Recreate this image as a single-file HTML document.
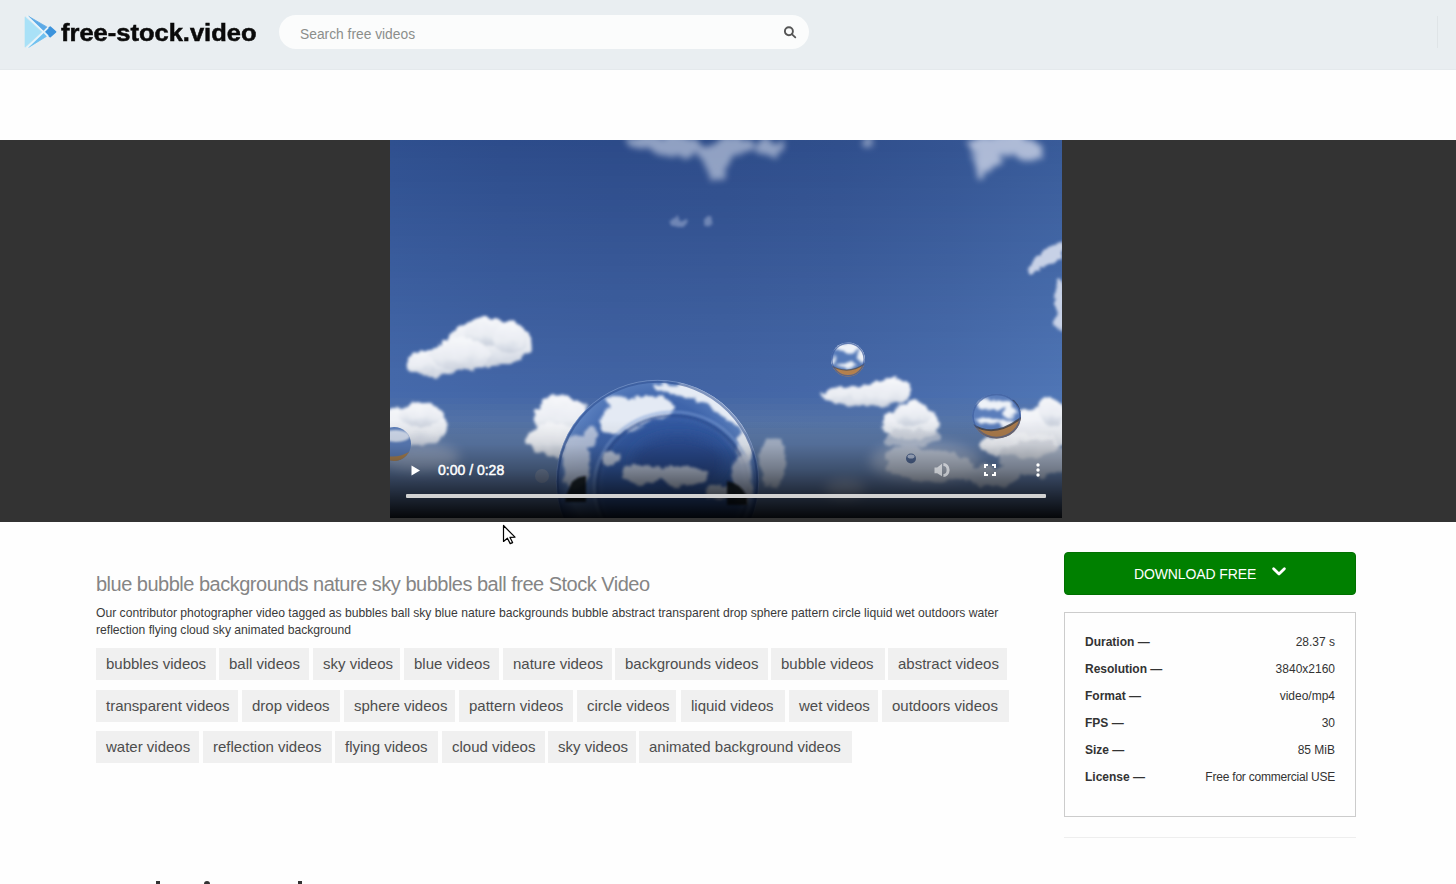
<!DOCTYPE html>
<html><head><meta charset="utf-8">
<style>
*{box-sizing:border-box}
html,body{margin:0;padding:0}
body{width:1456px;height:884px;overflow:hidden;background:#fefefe;position:relative;font-family:"Liberation Sans",sans-serif;color:#333}
.abs{position:absolute}
#hdr{position:absolute;left:0;top:0;width:1456px;height:70px;background:#e9eef1;border-bottom:1px solid #e4e9ec}
#logotxt{position:absolute;left:60.5px;top:18px;font-weight:bold;font-size:23px;line-height:30px;color:#0a0a0a;letter-spacing:0px;transform:scaleX(1.108);transform-origin:0 0;-webkit-text-stroke:0.5px #0a0a0a;white-space:nowrap}
#search{position:absolute;left:279px;top:15px;width:530px;height:34px;border-radius:17px;background:#fbfcfc}
#ph{position:absolute;left:300px;top:26px;font-size:13.8px;line-height:17px;color:#8b8e8b;white-space:nowrap}
#band{position:absolute;left:0;top:140px;width:1456px;height:382px;background:#333}
#video{position:absolute;left:390px;top:140px;width:672px;height:378px;overflow:hidden;background:#31508f}
#title{position:absolute;left:96px;top:572px;font-size:20px;line-height:24px;color:#858585;letter-spacing:-0.5px;white-space:nowrap}
#desc{position:absolute;left:96px;top:605px;width:920px;font-size:12.15px;line-height:17px;color:#3a3a3a}
.tag{position:absolute;height:32px;background:#f0f0f0;font-size:15px;line-height:32px;color:#4d4d4d;padding-left:10px;white-space:nowrap}
#dl{position:absolute;left:1064px;top:552px;width:292px;height:43px;background:#008000;border:1px solid #007000;border-radius:4px;color:#fff}
#dltxt{position:absolute;left:69px;top:13px;font-size:14px;letter-spacing:-0.12px;line-height:17px;white-space:nowrap}
#info{position:absolute;left:1064px;top:612px;width:292px;height:205px;border:1px solid #ccc}
.lab{position:absolute;left:20px;font-size:12px;font-weight:bold;color:#333;white-space:nowrap;line-height:14px}
.val{position:absolute;right:20px;font-size:12px;color:#333;white-space:nowrap;line-height:14px;text-align:right}
</style></head><body>
<div id="hdr"></div>
<svg class="abs" style="left:0px;top:0px" width="70" height="64" viewBox="0 0 70 64">
  <path d="M25,16.8 L41.8,31.9 L25,47.2 Z" fill="#a9e1f7" stroke="#a9e1f7" stroke-width="0.6" stroke-linejoin="round"/>
  <path d="M28.6,16.4 L46.8,26.9 L43.4,30.4 Z" fill="#5ca9e6" stroke="#5ca9e6" stroke-width="0.8" stroke-linejoin="round"/>
  <path d="M28.6,47.4 L46.4,36.4 L43.4,33.2 Z" fill="#70c1f0" stroke="#70c1f0" stroke-width="0.8" stroke-linejoin="round"/>
  <path d="M45,31.8 L50.2,27 L55.6,31.8 L50.2,36.6 Z" fill="#3c93dc" stroke="#3c93dc" stroke-width="1.6" stroke-linejoin="round"/>
  <path d="M27.2,16 L43.6,31.9 L27.2,47.8" fill="none" stroke="#e6f6fd" stroke-width="1.3"/>
  <path d="M44.2,31.9 L48.2,27.8 M44.2,31.9 L48.2,36" fill="none" stroke="#e6f6fd" stroke-width="1.1"/>
</svg>
<div id="logotxt">free-stock.video</div>
<div id="search"></div>
<div id="ph">Search free videos</div>
<svg class="abs" style="left:782px;top:25px" width="16" height="16" viewBox="0 0 16 16">
  <circle cx="6.9" cy="6.2" r="4" fill="none" stroke="#555" stroke-width="1.9"/>
  <line x1="9.8" y1="9.1" x2="13.3" y2="12.4" stroke="#555" stroke-width="1.8" stroke-linecap="round"/>
</svg>
<div class="abs" style="left:1437px;top:16px;width:1px;height:32px;background:#dfe4e7"></div>

<div id="band"></div>
<div id="video"><svg width="672" height="378" viewBox="0 0 672 378" style="position:absolute;left:0;top:0">
<defs>
<linearGradient id="sky" x1="0" y1="0" x2="0" y2="1">
 <stop offset="0" stop-color="#2c4c8c"/>
 <stop offset="0.3" stop-color="#345595"/>
 <stop offset="0.52" stop-color="#3c5f9f"/>
 <stop offset="0.62" stop-color="#4467a6"/>
 <stop offset="0.68" stop-color="#486aa8"/>
 <stop offset="0.78" stop-color="#5a77a5"/>
 <stop offset="1" stop-color="#5d76a0"/>
</linearGradient>
<linearGradient id="shade" x1="0" y1="0" x2="0" y2="1">
 <stop offset="0" stop-color="#000" stop-opacity="0"/>
 <stop offset="0.25" stop-color="#000" stop-opacity="0.08"/>
 <stop offset="0.5" stop-color="#000" stop-opacity="0.32"/>
 <stop offset="0.78" stop-color="#000" stop-opacity="0.68"/>
 <stop offset="1" stop-color="#000" stop-opacity="0.94"/>
</linearGradient>
<filter id="b3" x="-50%" y="-50%" width="200%" height="200%"><feGaussianBlur stdDeviation="3"/></filter>
<filter id="b2" x="-50%" y="-50%" width="200%" height="200%"><feGaussianBlur stdDeviation="2"/></filter>
<filter id="b4" x="-50%" y="-50%" width="200%" height="200%"><feGaussianBlur stdDeviation="4"/></filter>
<filter id="b6" x="-50%" y="-50%" width="200%" height="200%"><feGaussianBlur stdDeviation="6"/></filter>
<filter id="b1" x="-50%" y="-50%" width="200%" height="200%"><feGaussianBlur stdDeviation="1"/></filter>

<filter id="fluff" x="-30%" y="-30%" width="160%" height="160%"><feTurbulence type="fractalNoise" baseFrequency="0.09" numOctaves="3" seed="7" result="n"/><feDisplacementMap in="SourceGraphic" in2="n" scale="10" xChannelSelector="R" yChannelSelector="G" result="d"/><feGaussianBlur in="d" stdDeviation="1.6"/></filter>
<filter id="fluff2" x="-30%" y="-30%" width="160%" height="160%"><feTurbulence type="fractalNoise" baseFrequency="0.1" numOctaves="3" seed="11" result="n"/><feDisplacementMap in="SourceGraphic" in2="n" scale="12" xChannelSelector="R" yChannelSelector="G" result="d"/><feGaussianBlur in="d" stdDeviation="3.2"/></filter>
<linearGradient id="cl" x1="0" y1="0" x2="0" y2="1">
 <stop offset="0" stop-color="#f6f7fa"/>
 <stop offset="0.6" stop-color="#e9ecf2"/>
 <stop offset="1" stop-color="#c9d0dc"/>
</linearGradient>
<radialGradient id="bub" cx="0.5" cy="0.42" r="0.58">
 <stop offset="0" stop-color="#3a5fa6"/>
 <stop offset="0.55" stop-color="#3f65ab"/>
 <stop offset="0.78" stop-color="#5d82c0"/>
 <stop offset="0.9" stop-color="#2c4e94"/>
 <stop offset="1" stop-color="#7d9bd0"/>
</radialGradient>
<clipPath id="bigclip"><circle cx="267.5" cy="341.5" r="101.5"/></clipPath>
<clipPath id="bA"><circle cx="458" cy="219.5" r="17"/></clipPath>
<clipPath id="bB"><ellipse cx="606.5" cy="276" rx="24.5" ry="22.5"/></clipPath>
<clipPath id="bL"><circle cx="4" cy="304" r="17"/></clipPath>
</defs>
<rect width="672" height="378" fill="url(#sky)"/>
<defs><linearGradient id="s0"><stop offset="0.000" stop-color="#2f508f"/><stop offset="0.167" stop-color="#2d4c8b"/><stop offset="0.333" stop-color="#2c4b89"/><stop offset="0.500" stop-color="#2d4c89"/><stop offset="0.667" stop-color="#304f8c"/><stop offset="0.833" stop-color="#345492"/><stop offset="1.000" stop-color="#395b99"/></linearGradient><linearGradient id="s1"><stop offset="0.000" stop-color="#305090"/><stop offset="0.167" stop-color="#2e4d8b"/><stop offset="0.333" stop-color="#2d4b8a"/><stop offset="0.500" stop-color="#2e4c8a"/><stop offset="0.667" stop-color="#304f8d"/><stop offset="0.833" stop-color="#345492"/><stop offset="1.000" stop-color="#395c9a"/></linearGradient><linearGradient id="s2"><stop offset="0.000" stop-color="#305190"/><stop offset="0.167" stop-color="#2e4d8c"/><stop offset="0.333" stop-color="#2e4c8a"/><stop offset="0.500" stop-color="#2e4d8b"/><stop offset="0.667" stop-color="#31508e"/><stop offset="0.833" stop-color="#355593"/><stop offset="1.000" stop-color="#3a5c9b"/></linearGradient><linearGradient id="s3"><stop offset="0.000" stop-color="#315291"/><stop offset="0.167" stop-color="#2f4e8d"/><stop offset="0.333" stop-color="#2e4d8b"/><stop offset="0.500" stop-color="#2f4e8b"/><stop offset="0.667" stop-color="#31518e"/><stop offset="0.833" stop-color="#355694"/><stop offset="1.000" stop-color="#3a5d9b"/></linearGradient><linearGradient id="s4"><stop offset="0.000" stop-color="#315292"/><stop offset="0.167" stop-color="#2f4f8d"/><stop offset="0.333" stop-color="#2f4d8c"/><stop offset="0.500" stop-color="#304e8c"/><stop offset="0.667" stop-color="#32518f"/><stop offset="0.833" stop-color="#365694"/><stop offset="1.000" stop-color="#3b5e9c"/></linearGradient><linearGradient id="s5"><stop offset="0.000" stop-color="#325393"/><stop offset="0.167" stop-color="#304f8e"/><stop offset="0.333" stop-color="#2f4e8c"/><stop offset="0.500" stop-color="#304f8d"/><stop offset="0.667" stop-color="#325290"/><stop offset="0.833" stop-color="#365795"/><stop offset="1.000" stop-color="#3b5e9d"/></linearGradient><linearGradient id="s6"><stop offset="0.000" stop-color="#325393"/><stop offset="0.167" stop-color="#30508f"/><stop offset="0.333" stop-color="#304f8d"/><stop offset="0.500" stop-color="#314f8d"/><stop offset="0.667" stop-color="#335290"/><stop offset="0.833" stop-color="#375896"/><stop offset="1.000" stop-color="#3c5f9d"/></linearGradient><linearGradient id="s7"><stop offset="0.000" stop-color="#335494"/><stop offset="0.167" stop-color="#315190"/><stop offset="0.333" stop-color="#304f8e"/><stop offset="0.500" stop-color="#31508e"/><stop offset="0.667" stop-color="#335391"/><stop offset="0.833" stop-color="#375896"/><stop offset="1.000" stop-color="#3d609e"/></linearGradient><linearGradient id="s8"><stop offset="0.000" stop-color="#335595"/><stop offset="0.167" stop-color="#315190"/><stop offset="0.333" stop-color="#31508e"/><stop offset="0.500" stop-color="#32518f"/><stop offset="0.667" stop-color="#345492"/><stop offset="0.833" stop-color="#385997"/><stop offset="1.000" stop-color="#3d609f"/></linearGradient><linearGradient id="s9"><stop offset="0.000" stop-color="#345595"/><stop offset="0.167" stop-color="#325291"/><stop offset="0.333" stop-color="#31508f"/><stop offset="0.500" stop-color="#32518f"/><stop offset="0.667" stop-color="#355492"/><stop offset="0.833" stop-color="#385998"/><stop offset="1.000" stop-color="#3e619f"/></linearGradient><linearGradient id="s10"><stop offset="0.000" stop-color="#355696"/><stop offset="0.167" stop-color="#325292"/><stop offset="0.333" stop-color="#325190"/><stop offset="0.500" stop-color="#335290"/><stop offset="0.667" stop-color="#355593"/><stop offset="0.833" stop-color="#395a98"/><stop offset="1.000" stop-color="#3e61a0"/></linearGradient><linearGradient id="s11"><stop offset="0.000" stop-color="#355797"/><stop offset="0.167" stop-color="#335392"/><stop offset="0.333" stop-color="#325290"/><stop offset="0.500" stop-color="#335391"/><stop offset="0.667" stop-color="#365694"/><stop offset="0.833" stop-color="#395b99"/><stop offset="1.000" stop-color="#3f62a1"/></linearGradient><linearGradient id="s12"><stop offset="0.000" stop-color="#365797"/><stop offset="0.167" stop-color="#345493"/><stop offset="0.333" stop-color="#335291"/><stop offset="0.500" stop-color="#345391"/><stop offset="0.667" stop-color="#365694"/><stop offset="0.833" stop-color="#3a5b9a"/><stop offset="1.000" stop-color="#3f63a1"/></linearGradient><linearGradient id="s13"><stop offset="0.000" stop-color="#365898"/><stop offset="0.167" stop-color="#345494"/><stop offset="0.333" stop-color="#335392"/><stop offset="0.500" stop-color="#345492"/><stop offset="0.667" stop-color="#375795"/><stop offset="0.833" stop-color="#3b5c9a"/><stop offset="1.000" stop-color="#4063a2"/></linearGradient><linearGradient id="s14"><stop offset="0.000" stop-color="#375899"/><stop offset="0.167" stop-color="#355594"/><stop offset="0.333" stop-color="#345492"/><stop offset="0.500" stop-color="#355493"/><stop offset="0.667" stop-color="#375796"/><stop offset="0.833" stop-color="#3b5d9b"/><stop offset="1.000" stop-color="#4064a3"/></linearGradient><linearGradient id="s15"><stop offset="0.000" stop-color="#375999"/><stop offset="0.167" stop-color="#355695"/><stop offset="0.333" stop-color="#355493"/><stop offset="0.500" stop-color="#355593"/><stop offset="0.667" stop-color="#385896"/><stop offset="0.833" stop-color="#3c5d9c"/><stop offset="1.000" stop-color="#4165a3"/></linearGradient><linearGradient id="s16"><stop offset="0.000" stop-color="#385a9a"/><stop offset="0.167" stop-color="#365696"/><stop offset="0.333" stop-color="#355594"/><stop offset="0.500" stop-color="#365694"/><stop offset="0.667" stop-color="#385997"/><stop offset="0.833" stop-color="#3c5e9c"/><stop offset="1.000" stop-color="#4165a4"/></linearGradient><linearGradient id="s17"><stop offset="0.000" stop-color="#385a9b"/><stop offset="0.167" stop-color="#365796"/><stop offset="0.333" stop-color="#365694"/><stop offset="0.500" stop-color="#375695"/><stop offset="0.667" stop-color="#395998"/><stop offset="0.833" stop-color="#3d5f9d"/><stop offset="1.000" stop-color="#4266a5"/></linearGradient><linearGradient id="s18"><stop offset="0.000" stop-color="#395b9b"/><stop offset="0.167" stop-color="#375797"/><stop offset="0.333" stop-color="#365695"/><stop offset="0.500" stop-color="#375795"/><stop offset="0.667" stop-color="#395a98"/><stop offset="0.833" stop-color="#3d5f9e"/><stop offset="1.000" stop-color="#4366a5"/></linearGradient><linearGradient id="s19"><stop offset="0.000" stop-color="#395c9c"/><stop offset="0.167" stop-color="#375898"/><stop offset="0.333" stop-color="#375796"/><stop offset="0.500" stop-color="#385896"/><stop offset="0.667" stop-color="#3a5b99"/><stop offset="0.833" stop-color="#3e609e"/><stop offset="1.000" stop-color="#4367a6"/></linearGradient><linearGradient id="s20"><stop offset="0.000" stop-color="#3a5c9d"/><stop offset="0.167" stop-color="#385998"/><stop offset="0.333" stop-color="#375796"/><stop offset="0.500" stop-color="#385897"/><stop offset="0.667" stop-color="#3a5b9a"/><stop offset="0.833" stop-color="#3e609f"/><stop offset="1.000" stop-color="#4468a7"/></linearGradient><linearGradient id="s21"><stop offset="0.000" stop-color="#3a5d9d"/><stop offset="0.167" stop-color="#385999"/><stop offset="0.333" stop-color="#385897"/><stop offset="0.500" stop-color="#395997"/><stop offset="0.667" stop-color="#3b5c9a"/><stop offset="0.833" stop-color="#3f61a0"/><stop offset="1.000" stop-color="#4468a7"/></linearGradient><linearGradient id="s22"><stop offset="0.000" stop-color="#3b5d9e"/><stop offset="0.167" stop-color="#395a9a"/><stop offset="0.333" stop-color="#385998"/><stop offset="0.500" stop-color="#395998"/><stop offset="0.667" stop-color="#3c5c9b"/><stop offset="0.833" stop-color="#3f62a0"/><stop offset="1.000" stop-color="#4569a8"/></linearGradient><linearGradient id="s23"><stop offset="0.000" stop-color="#3c5e9f"/><stop offset="0.167" stop-color="#395b9a"/><stop offset="0.333" stop-color="#395998"/><stop offset="0.500" stop-color="#3a5a99"/><stop offset="0.667" stop-color="#3c5d9c"/><stop offset="0.833" stop-color="#4062a1"/><stop offset="1.000" stop-color="#456aa9"/></linearGradient><linearGradient id="s24"><stop offset="0.000" stop-color="#3c5f9f"/><stop offset="0.167" stop-color="#3a5b9b"/><stop offset="0.333" stop-color="#395a99"/><stop offset="0.500" stop-color="#3a5b99"/><stop offset="0.667" stop-color="#3d5e9c"/><stop offset="0.833" stop-color="#4063a2"/><stop offset="1.000" stop-color="#466aa9"/></linearGradient><linearGradient id="s25"><stop offset="0.000" stop-color="#3d5fa0"/><stop offset="0.167" stop-color="#3b5c9c"/><stop offset="0.333" stop-color="#3a5b9a"/><stop offset="0.500" stop-color="#3b5b9a"/><stop offset="0.667" stop-color="#3d5e9d"/><stop offset="0.833" stop-color="#4164a2"/><stop offset="1.000" stop-color="#466baa"/></linearGradient><linearGradient id="s26"><stop offset="0.000" stop-color="#3d60a1"/><stop offset="0.167" stop-color="#3b5d9c"/><stop offset="0.333" stop-color="#3a5b9a"/><stop offset="0.500" stop-color="#3b5c9b"/><stop offset="0.667" stop-color="#3e5f9e"/><stop offset="0.833" stop-color="#4264a3"/><stop offset="1.000" stop-color="#476cab"/></linearGradient><linearGradient id="s27"><stop offset="0.000" stop-color="#3e61a1"/><stop offset="0.167" stop-color="#3c5d9d"/><stop offset="0.333" stop-color="#3b5c9b"/><stop offset="0.500" stop-color="#3c5d9b"/><stop offset="0.667" stop-color="#3e609e"/><stop offset="0.833" stop-color="#4265a4"/><stop offset="1.000" stop-color="#476cab"/></linearGradient><linearGradient id="s28"><stop offset="0.000" stop-color="#3e61a2"/><stop offset="0.167" stop-color="#3c5e9e"/><stop offset="0.333" stop-color="#3c5c9c"/><stop offset="0.500" stop-color="#3c5d9c"/><stop offset="0.667" stop-color="#3f609f"/><stop offset="0.833" stop-color="#4365a4"/><stop offset="1.000" stop-color="#486dac"/></linearGradient><linearGradient id="s29"><stop offset="0.000" stop-color="#3f62a3"/><stop offset="0.167" stop-color="#3d5e9e"/><stop offset="0.333" stop-color="#3c5d9c"/><stop offset="0.500" stop-color="#3d5e9d"/><stop offset="0.667" stop-color="#3f61a0"/><stop offset="0.833" stop-color="#4366a5"/><stop offset="1.000" stop-color="#486dad"/></linearGradient><linearGradient id="s30"><stop offset="0.000" stop-color="#3f63a3"/><stop offset="0.167" stop-color="#3d5f9f"/><stop offset="0.333" stop-color="#3d5e9d"/><stop offset="0.500" stop-color="#3e5f9d"/><stop offset="0.667" stop-color="#4062a0"/><stop offset="0.833" stop-color="#4467a6"/><stop offset="1.000" stop-color="#496ead"/></linearGradient><linearGradient id="s31"><stop offset="0.000" stop-color="#4063a4"/><stop offset="0.167" stop-color="#3e60a0"/><stop offset="0.333" stop-color="#3d5e9e"/><stop offset="0.500" stop-color="#3e5f9e"/><stop offset="0.667" stop-color="#4062a1"/><stop offset="0.833" stop-color="#4467a6"/><stop offset="1.000" stop-color="#4a6fae"/></linearGradient><linearGradient id="s32"><stop offset="0.000" stop-color="#4064a5"/><stop offset="0.167" stop-color="#3e60a0"/><stop offset="0.333" stop-color="#3e5f9e"/><stop offset="0.500" stop-color="#3f609f"/><stop offset="0.667" stop-color="#4163a2"/><stop offset="0.833" stop-color="#4568a7"/><stop offset="1.000" stop-color="#4a6faf"/></linearGradient><linearGradient id="s33"><stop offset="0.000" stop-color="#4164a5"/><stop offset="0.167" stop-color="#3f61a1"/><stop offset="0.333" stop-color="#3e609f"/><stop offset="0.500" stop-color="#3f609f"/><stop offset="0.667" stop-color="#4163a2"/><stop offset="0.833" stop-color="#4569a8"/><stop offset="1.000" stop-color="#4b70af"/></linearGradient><linearGradient id="s34"><stop offset="0.000" stop-color="#4165a6"/><stop offset="0.167" stop-color="#3f62a2"/><stop offset="0.333" stop-color="#3f60a0"/><stop offset="0.500" stop-color="#4061a0"/><stop offset="0.667" stop-color="#4264a3"/><stop offset="0.833" stop-color="#4669a8"/><stop offset="1.000" stop-color="#4b71b0"/></linearGradient><linearGradient id="s35"><stop offset="0.000" stop-color="#4266a7"/><stop offset="0.167" stop-color="#4062a2"/><stop offset="0.333" stop-color="#3f61a0"/><stop offset="0.500" stop-color="#4062a1"/><stop offset="0.667" stop-color="#4365a4"/><stop offset="0.833" stop-color="#466aa9"/><stop offset="1.000" stop-color="#4c71b1"/></linearGradient><linearGradient id="s36"><stop offset="0.000" stop-color="#4366a7"/><stop offset="0.167" stop-color="#4063a3"/><stop offset="0.333" stop-color="#4061a1"/><stop offset="0.500" stop-color="#4162a1"/><stop offset="0.667" stop-color="#4365a4"/><stop offset="0.833" stop-color="#476aaa"/><stop offset="1.000" stop-color="#4c72b1"/></linearGradient><linearGradient id="s37"><stop offset="0.000" stop-color="#4367a8"/><stop offset="0.167" stop-color="#4163a4"/><stop offset="0.333" stop-color="#4062a2"/><stop offset="0.500" stop-color="#4163a2"/><stop offset="0.667" stop-color="#4466a5"/><stop offset="0.833" stop-color="#476baa"/><stop offset="1.000" stop-color="#4d72b2"/></linearGradient><linearGradient id="s38"><stop offset="0.000" stop-color="#4468a9"/><stop offset="0.167" stop-color="#4264a4"/><stop offset="0.333" stop-color="#4163a2"/><stop offset="0.500" stop-color="#4264a3"/><stop offset="0.667" stop-color="#4467a6"/><stop offset="0.833" stop-color="#486cab"/><stop offset="1.000" stop-color="#4d73b3"/></linearGradient><linearGradient id="s39"><stop offset="0.000" stop-color="#4468a9"/><stop offset="0.167" stop-color="#4265a5"/><stop offset="0.333" stop-color="#4163a3"/><stop offset="0.500" stop-color="#4264a3"/><stop offset="0.667" stop-color="#4567a6"/><stop offset="0.833" stop-color="#496cac"/><stop offset="1.000" stop-color="#4e74b3"/></linearGradient><linearGradient id="s40"><stop offset="0.000" stop-color="#4569aa"/><stop offset="0.167" stop-color="#4365a6"/><stop offset="0.333" stop-color="#4264a4"/><stop offset="0.500" stop-color="#4365a4"/><stop offset="0.667" stop-color="#4568a7"/><stop offset="0.833" stop-color="#496dac"/><stop offset="1.000" stop-color="#4e74b4"/></linearGradient><linearGradient id="s41"><stop offset="0.000" stop-color="#4569ab"/><stop offset="0.167" stop-color="#4366a6"/><stop offset="0.333" stop-color="#4365a4"/><stop offset="0.500" stop-color="#4365a5"/><stop offset="0.667" stop-color="#4668a8"/><stop offset="0.833" stop-color="#4a6ead"/><stop offset="1.000" stop-color="#4f75b5"/></linearGradient><linearGradient id="s42"><stop offset="0.000" stop-color="#466aab"/><stop offset="0.167" stop-color="#4467a7"/><stop offset="0.333" stop-color="#4365a5"/><stop offset="0.500" stop-color="#4466a5"/><stop offset="0.667" stop-color="#4669a8"/><stop offset="0.833" stop-color="#4a6eae"/><stop offset="1.000" stop-color="#4f76b5"/></linearGradient><linearGradient id="s43"><stop offset="0.000" stop-color="#496caa"/><stop offset="0.167" stop-color="#4769a7"/><stop offset="0.333" stop-color="#4768a5"/><stop offset="0.500" stop-color="#4769a5"/><stop offset="0.667" stop-color="#496ba8"/><stop offset="0.833" stop-color="#4d70ac"/><stop offset="1.000" stop-color="#5176b3"/></linearGradient><linearGradient id="s44"><stop offset="0.000" stop-color="#4c6ea9"/><stop offset="0.167" stop-color="#4a6ca6"/><stop offset="0.333" stop-color="#4a6ba5"/><stop offset="0.500" stop-color="#4b6ba5"/><stop offset="0.667" stop-color="#4c6da7"/><stop offset="0.833" stop-color="#4f71ab"/><stop offset="1.000" stop-color="#5376b0"/></linearGradient><linearGradient id="s45"><stop offset="0.000" stop-color="#4f70a8"/><stop offset="0.167" stop-color="#4e6ea6"/><stop offset="0.333" stop-color="#4d6da5"/><stop offset="0.500" stop-color="#4e6ea5"/><stop offset="0.667" stop-color="#4f6fa7"/><stop offset="0.833" stop-color="#5172aa"/><stop offset="1.000" stop-color="#5476ae"/></linearGradient><linearGradient id="s46"><stop offset="0.000" stop-color="#5272a8"/><stop offset="0.167" stop-color="#5170a6"/><stop offset="0.333" stop-color="#5170a5"/><stop offset="0.500" stop-color="#5170a5"/><stop offset="0.667" stop-color="#5271a6"/><stop offset="0.833" stop-color="#5474a8"/><stop offset="1.000" stop-color="#5676ac"/></linearGradient><linearGradient id="s47"><stop offset="0.000" stop-color="#5574a7"/><stop offset="0.167" stop-color="#5473a5"/><stop offset="0.333" stop-color="#5473a5"/><stop offset="0.500" stop-color="#5473a5"/><stop offset="0.667" stop-color="#5574a6"/><stop offset="0.833" stop-color="#5675a7"/><stop offset="1.000" stop-color="#5777a9"/></linearGradient><linearGradient id="s48"><stop offset="0.000" stop-color="#5876a6"/><stop offset="0.167" stop-color="#5875a5"/><stop offset="0.333" stop-color="#5875a5"/><stop offset="0.500" stop-color="#5875a5"/><stop offset="0.667" stop-color="#5876a5"/><stop offset="0.833" stop-color="#5876a6"/><stop offset="1.000" stop-color="#5977a7"/></linearGradient><linearGradient id="s49"><stop offset="0.000" stop-color="#5a77a5"/><stop offset="0.167" stop-color="#5a77a5"/><stop offset="0.333" stop-color="#5a77a5"/><stop offset="0.500" stop-color="#5a77a5"/><stop offset="0.667" stop-color="#5a77a5"/><stop offset="0.833" stop-color="#5a77a5"/><stop offset="1.000" stop-color="#5a77a5"/></linearGradient><linearGradient id="s50"><stop offset="0.000" stop-color="#5a77a5"/><stop offset="0.167" stop-color="#5a77a5"/><stop offset="0.333" stop-color="#5a77a5"/><stop offset="0.500" stop-color="#5a77a5"/><stop offset="0.667" stop-color="#5a77a5"/><stop offset="0.833" stop-color="#5a77a5"/><stop offset="1.000" stop-color="#5a77a5"/></linearGradient><linearGradient id="s51"><stop offset="0.000" stop-color="#5b77a4"/><stop offset="0.167" stop-color="#5b77a4"/><stop offset="0.333" stop-color="#5b77a4"/><stop offset="0.500" stop-color="#5b77a4"/><stop offset="0.667" stop-color="#5b77a4"/><stop offset="0.833" stop-color="#5b77a4"/><stop offset="1.000" stop-color="#5b77a4"/></linearGradient><linearGradient id="s52"><stop offset="0.000" stop-color="#5b77a4"/><stop offset="0.167" stop-color="#5b77a4"/><stop offset="0.333" stop-color="#5b77a4"/><stop offset="0.500" stop-color="#5b77a4"/><stop offset="0.667" stop-color="#5b77a4"/><stop offset="0.833" stop-color="#5b77a4"/><stop offset="1.000" stop-color="#5b77a4"/></linearGradient><linearGradient id="s53"><stop offset="0.000" stop-color="#5b77a3"/><stop offset="0.167" stop-color="#5b77a3"/><stop offset="0.333" stop-color="#5b77a3"/><stop offset="0.500" stop-color="#5b77a3"/><stop offset="0.667" stop-color="#5b77a3"/><stop offset="0.833" stop-color="#5b77a3"/><stop offset="1.000" stop-color="#5b77a3"/></linearGradient><linearGradient id="s54"><stop offset="0.000" stop-color="#5b77a3"/><stop offset="0.167" stop-color="#5b77a3"/><stop offset="0.333" stop-color="#5b77a3"/><stop offset="0.500" stop-color="#5b77a3"/><stop offset="0.667" stop-color="#5b77a3"/><stop offset="0.833" stop-color="#5b77a3"/><stop offset="1.000" stop-color="#5b77a3"/></linearGradient><linearGradient id="s55"><stop offset="0.000" stop-color="#5b77a3"/><stop offset="0.167" stop-color="#5b77a3"/><stop offset="0.333" stop-color="#5b77a3"/><stop offset="0.500" stop-color="#5b77a3"/><stop offset="0.667" stop-color="#5b77a3"/><stop offset="0.833" stop-color="#5b77a3"/><stop offset="1.000" stop-color="#5b77a3"/></linearGradient><linearGradient id="s56"><stop offset="0.000" stop-color="#5c76a2"/><stop offset="0.167" stop-color="#5c76a2"/><stop offset="0.333" stop-color="#5c76a2"/><stop offset="0.500" stop-color="#5c76a2"/><stop offset="0.667" stop-color="#5c76a2"/><stop offset="0.833" stop-color="#5c76a2"/><stop offset="1.000" stop-color="#5c76a2"/></linearGradient><linearGradient id="s57"><stop offset="0.000" stop-color="#5c76a2"/><stop offset="0.167" stop-color="#5c76a2"/><stop offset="0.333" stop-color="#5c76a2"/><stop offset="0.500" stop-color="#5c76a2"/><stop offset="0.667" stop-color="#5c76a2"/><stop offset="0.833" stop-color="#5c76a2"/><stop offset="1.000" stop-color="#5c76a2"/></linearGradient><linearGradient id="s58"><stop offset="0.000" stop-color="#5c76a2"/><stop offset="0.167" stop-color="#5c76a2"/><stop offset="0.333" stop-color="#5c76a2"/><stop offset="0.500" stop-color="#5c76a2"/><stop offset="0.667" stop-color="#5c76a2"/><stop offset="0.833" stop-color="#5c76a2"/><stop offset="1.000" stop-color="#5c76a2"/></linearGradient><linearGradient id="s59"><stop offset="0.000" stop-color="#5c76a1"/><stop offset="0.167" stop-color="#5c76a1"/><stop offset="0.333" stop-color="#5c76a1"/><stop offset="0.500" stop-color="#5c76a1"/><stop offset="0.667" stop-color="#5c76a1"/><stop offset="0.833" stop-color="#5c76a1"/><stop offset="1.000" stop-color="#5c76a1"/></linearGradient><linearGradient id="s60"><stop offset="0.000" stop-color="#5c76a1"/><stop offset="0.167" stop-color="#5c76a1"/><stop offset="0.333" stop-color="#5c76a1"/><stop offset="0.500" stop-color="#5c76a1"/><stop offset="0.667" stop-color="#5c76a1"/><stop offset="0.833" stop-color="#5c76a1"/><stop offset="1.000" stop-color="#5c76a1"/></linearGradient><linearGradient id="s61"><stop offset="0.000" stop-color="#5d76a1"/><stop offset="0.167" stop-color="#5d76a1"/><stop offset="0.333" stop-color="#5d76a1"/><stop offset="0.500" stop-color="#5d76a1"/><stop offset="0.667" stop-color="#5d76a1"/><stop offset="0.833" stop-color="#5d76a1"/><stop offset="1.000" stop-color="#5d76a1"/></linearGradient><linearGradient id="s62"><stop offset="0.000" stop-color="#5d76a0"/><stop offset="0.167" stop-color="#5d76a0"/><stop offset="0.333" stop-color="#5d76a0"/><stop offset="0.500" stop-color="#5d76a0"/><stop offset="0.667" stop-color="#5d76a0"/><stop offset="0.833" stop-color="#5d76a0"/><stop offset="1.000" stop-color="#5d76a0"/></linearGradient><linearGradient id="s63"><stop offset="0.000" stop-color="#5d76a0"/><stop offset="0.167" stop-color="#5d76a0"/><stop offset="0.333" stop-color="#5d76a0"/><stop offset="0.500" stop-color="#5d76a0"/><stop offset="0.667" stop-color="#5d76a0"/><stop offset="0.833" stop-color="#5d76a0"/><stop offset="1.000" stop-color="#5d76a0"/></linearGradient></defs><g><rect y="0" width="672" height="7" fill="url(#s0)"/><rect y="6" width="672" height="7" fill="url(#s1)"/><rect y="12" width="672" height="7" fill="url(#s2)"/><rect y="18" width="672" height="7" fill="url(#s3)"/><rect y="24" width="672" height="7" fill="url(#s4)"/><rect y="30" width="672" height="7" fill="url(#s5)"/><rect y="36" width="672" height="7" fill="url(#s6)"/><rect y="42" width="672" height="7" fill="url(#s7)"/><rect y="48" width="672" height="7" fill="url(#s8)"/><rect y="54" width="672" height="7" fill="url(#s9)"/><rect y="60" width="672" height="7" fill="url(#s10)"/><rect y="66" width="672" height="7" fill="url(#s11)"/><rect y="72" width="672" height="7" fill="url(#s12)"/><rect y="78" width="672" height="7" fill="url(#s13)"/><rect y="84" width="672" height="7" fill="url(#s14)"/><rect y="90" width="672" height="7" fill="url(#s15)"/><rect y="96" width="672" height="7" fill="url(#s16)"/><rect y="102" width="672" height="7" fill="url(#s17)"/><rect y="108" width="672" height="7" fill="url(#s18)"/><rect y="114" width="672" height="7" fill="url(#s19)"/><rect y="120" width="672" height="7" fill="url(#s20)"/><rect y="126" width="672" height="7" fill="url(#s21)"/><rect y="132" width="672" height="7" fill="url(#s22)"/><rect y="138" width="672" height="7" fill="url(#s23)"/><rect y="144" width="672" height="7" fill="url(#s24)"/><rect y="150" width="672" height="7" fill="url(#s25)"/><rect y="156" width="672" height="7" fill="url(#s26)"/><rect y="162" width="672" height="7" fill="url(#s27)"/><rect y="168" width="672" height="7" fill="url(#s28)"/><rect y="174" width="672" height="7" fill="url(#s29)"/><rect y="180" width="672" height="7" fill="url(#s30)"/><rect y="186" width="672" height="7" fill="url(#s31)"/><rect y="192" width="672" height="7" fill="url(#s32)"/><rect y="198" width="672" height="7" fill="url(#s33)"/><rect y="204" width="672" height="7" fill="url(#s34)"/><rect y="210" width="672" height="7" fill="url(#s35)"/><rect y="216" width="672" height="7" fill="url(#s36)"/><rect y="222" width="672" height="7" fill="url(#s37)"/><rect y="228" width="672" height="7" fill="url(#s38)"/><rect y="234" width="672" height="7" fill="url(#s39)"/><rect y="240" width="672" height="7" fill="url(#s40)"/><rect y="246" width="672" height="7" fill="url(#s41)"/><rect y="252" width="672" height="7" fill="url(#s42)"/><rect y="258" width="672" height="7" fill="url(#s43)"/><rect y="264" width="672" height="7" fill="url(#s44)"/><rect y="270" width="672" height="7" fill="url(#s45)"/><rect y="276" width="672" height="7" fill="url(#s46)"/><rect y="282" width="672" height="7" fill="url(#s47)"/><rect y="288" width="672" height="7" fill="url(#s48)"/><rect y="294" width="672" height="7" fill="url(#s49)"/><rect y="300" width="672" height="7" fill="url(#s50)"/><rect y="306" width="672" height="7" fill="url(#s51)"/><rect y="312" width="672" height="7" fill="url(#s52)"/><rect y="318" width="672" height="7" fill="url(#s53)"/><rect y="324" width="672" height="7" fill="url(#s54)"/><rect y="330" width="672" height="7" fill="url(#s55)"/><rect y="336" width="672" height="7" fill="url(#s56)"/><rect y="342" width="672" height="7" fill="url(#s57)"/><rect y="348" width="672" height="7" fill="url(#s58)"/><rect y="354" width="672" height="7" fill="url(#s59)"/><rect y="360" width="672" height="7" fill="url(#s60)"/><rect y="366" width="672" height="7" fill="url(#s61)"/><rect y="372" width="672" height="7" fill="url(#s62)"/><rect y="378" width="672" height="7" fill="url(#s63)"/></g>
<!-- top clouds (wispy) -->
<g fill="#d3dae9" filter="url(#fluff2)" opacity="0.6">
 <ellipse cx="250" cy="2" rx="14" ry="6"/>
 <ellipse cx="285" cy="6" rx="26" ry="11"/>
 <path d="M304,4 L352,4 L330,40 L322,42 Z"/>
 <ellipse cx="345" cy="6" rx="20" ry="9"/>
 <ellipse cx="380" cy="8" rx="14" ry="9"/>
 <ellipse cx="478" cy="2" rx="5" ry="5"/>
</g>
<g fill="#d6dcec" filter="url(#fluff2)" opacity="0.75">
 <ellipse cx="612" cy="5" rx="34" ry="11"/>
 <ellipse cx="598" cy="18" rx="14" ry="12"/>
 <ellipse cx="590" cy="32" rx="5" ry="8"/>
 <ellipse cx="638" cy="12" rx="16" ry="9"/>
</g>
<g fill="#b7c3e0" filter="url(#fluff)" opacity="0.45">
 <ellipse cx="289" cy="82" rx="9" ry="5"/>
 <ellipse cx="318" cy="81" rx="5" ry="5"/>
</g>
<g fill="#dfe4f2" filter="url(#fluff)" opacity="0.85">
 <path d="M672,100 C660,104 648,113 640,124 C635,132 642,136 650,129 C656,124 664,122 672,120 Z"/>
 <ellipse cx="670" cy="165" rx="5" ry="28"/>
</g>
<!-- left cloud -->
<g fill="url(#cl)" filter="url(#fluff)">
 <ellipse cx="100" cy="203" rx="42" ry="24"/>
 <ellipse cx="96" cy="192" rx="22" ry="14"/>
 <ellipse cx="120" cy="198" rx="18" ry="15"/>
 <ellipse cx="42" cy="223" rx="27" ry="13"/>
 <ellipse cx="70" cy="214" rx="30" ry="16"/>
</g>
<!-- bottom-left cloud -->
<g fill="url(#cl)" filter="url(#fluff)">
 <ellipse cx="22" cy="287" rx="36" ry="20"/>
 <ellipse cx="30" cy="275" rx="22" ry="12"/>
</g>
<!-- cloud behind big bubble -->
<g fill="url(#cl)" filter="url(#fluff)">
 <ellipse cx="172" cy="277" rx="28" ry="22"/>
 <ellipse cx="166" cy="300" rx="30" ry="16"/>
</g>
<!-- right clouds -->
<g fill="url(#cl)" filter="url(#fluff)">
 <path d="M430,256 C445,246 470,248 480,244 C492,238 512,236 520,246 C525,256 515,266 490,266 C465,267 440,264 430,256 Z"/>
 <ellipse cx="521" cy="284" rx="30" ry="16"/>
 <ellipse cx="522" cy="274" rx="18" ry="12"/>
 <ellipse cx="648" cy="290" rx="34" ry="22"/>
 <ellipse cx="662" cy="272" rx="14" ry="14"/>
 <ellipse cx="630" cy="305" rx="40" ry="12"/>
</g>
<!-- haze / reflection band -->
<g fill="#b7bfd0" filter="url(#b6)" opacity="0.5">
 <ellipse cx="535" cy="322" rx="55" ry="20"/>
 <ellipse cx="30" cy="318" rx="40" ry="14"/>
 <ellipse cx="455" cy="350" rx="20" ry="10"/>
</g>
<g fill="#cdd2db" filter="url(#fluff)" opacity="0.68">
 <ellipse cx="540" cy="326" rx="44" ry="16"/>
 <ellipse cx="515" cy="316" rx="18" ry="10"/>
 <ellipse cx="383" cy="322" rx="13" ry="26"/>
 <ellipse cx="521" cy="298" rx="28" ry="9"/>
 <ellipse cx="645" cy="318" rx="36" ry="18"/>
 <ellipse cx="600" cy="336" rx="30" ry="10"/>
</g>
<!-- small bubbles -->
<g>
 <circle cx="458" cy="219.5" r="17" fill="#5479b8"/>
 <g clip-path="url(#bA)">
  <g fill="#eef2f8" filter="url(#fluff)">
   <ellipse cx="456" cy="207" rx="14" ry="5"/>
   <ellipse cx="472" cy="216" rx="4" ry="8"/>
   <ellipse cx="443" cy="220" rx="3" ry="7"/>
   <ellipse cx="458" cy="226" rx="9" ry="3"/>
  </g>
  <path d="M440,225 Q458,236 476,223 L476,240 L440,240 Z" fill="#b3804e"/>
  <path d="M440,225 Q458,236 476,223" fill="none" stroke="#4a4a50" stroke-width="1.2" opacity="0.7"/>
  <circle cx="458" cy="219.5" r="16.2" fill="none" stroke="#3a5a9c" stroke-width="1.5" opacity="0.7"/>
 </g>
</g>
<g>
 <ellipse cx="606.5" cy="276" rx="24.5" ry="22.5" fill="#5a7dbb"/>
 <g clip-path="url(#bB)">
  <g fill="#eef2f8" filter="url(#fluff)">
   <ellipse cx="604" cy="264" rx="18" ry="6"/>
   <ellipse cx="620" cy="272" rx="7" ry="6"/>
   <ellipse cx="598" cy="282" rx="12" ry="4"/>
   <ellipse cx="616" cy="284" rx="9" ry="4"/>
  </g>
  <path d="M580,283 Q604,300 632,277 L634,300 L580,300 Z" fill="#a97a4b"/>
  <path d="M580,283 Q604,300 632,277" fill="none" stroke="#3d3f46" stroke-width="2" opacity="0.8"/>
  <path d="M622,260 Q638,274 630,294 L640,296 L640,258 Z" fill="#383c45"/>
  <ellipse cx="606.5" cy="276" rx="23.6" ry="21.6" fill="none" stroke="#3a5a9a" stroke-width="1.8" opacity="0.6"/>
 </g>
</g>
<g>
 <circle cx="4" cy="304" r="17" fill="#5a7cb8"/>
 <g clip-path="url(#bL)">
  <ellipse cx="6" cy="296" rx="14" ry="6" fill="#e3e9f3" opacity="0.85" filter="url(#b1)"/>
  <path d="M-14,312 Q4,322 22,310 L22,330 L-14,330 Z" fill="#a8804f"/>
 </g>
</g>
<circle cx="521" cy="318.5" r="5" fill="#4e6590"/><ellipse cx="521" cy="316.5" rx="3.5" ry="2" fill="#c8d2e6" opacity="0.8"/>
<circle cx="152" cy="336" r="7" fill="#8894aa" opacity="0.6"/>
<!-- big bubble -->
<g>
 <circle cx="267.5" cy="341.5" r="101.5" fill="url(#bub)"/>
 <g clip-path="url(#bigclip)">
  <g fill="#eef2f8" filter="url(#fluff)" opacity="0.95">
   <path d="M212,275 C222,262 245,255 262,256 C278,257 285,262 282,270 C276,282 262,278 248,284 C236,290 228,296 220,296 C210,294 208,284 212,275 Z"/>
   <path d="M262,246 C292,240 326,248 348,266 C358,276 360,292 352,292 C340,284 326,266 300,258 C284,254 266,254 262,246 Z"/>
   <ellipse cx="354" cy="308" rx="8" ry="16"/>
   <ellipse cx="246" cy="290" rx="10" ry="6"/>
   <ellipse cx="228" cy="262" rx="12" ry="6"/>
  </g>
  <ellipse cx="283" cy="347" rx="75" ry="71" fill="none" stroke="#2a4a8c" stroke-width="4" opacity="0.6" filter="url(#b1)"/>
  <ellipse cx="283" cy="347" rx="79" ry="75" fill="none" stroke="#7d9ed6" stroke-width="3" opacity="0.5" filter="url(#b1)"/>
  <ellipse cx="283" cy="347" rx="72" ry="68" fill="#3258a0" filter="url(#b2)"/>
  <ellipse cx="288" cy="322" rx="45" ry="26" fill="#2a4b90" filter="url(#b6)"/>
  <g fill="#d2d9e6" filter="url(#fluff)" opacity="0.85">
   <ellipse cx="252" cy="334" rx="20" ry="10"/>
   <ellipse cx="293" cy="336" rx="24" ry="10"/>
   <ellipse cx="222" cy="318" rx="9" ry="7"/>
   <ellipse cx="330" cy="352" rx="14" ry="7"/>
  </g>
  <g fill="#d0d8e8" filter="url(#fluff)" opacity="0.8">
   <ellipse cx="186" cy="322" rx="14" ry="28"/>
   <ellipse cx="352" cy="338" rx="10" ry="26"/>
   <ellipse cx="200" cy="296" rx="8" ry="10"/>
  </g>
 </g>
 <circle cx="267.5" cy="341.5" r="100" fill="none" stroke="#2c4c8e" stroke-width="2.5" opacity="0.55"/>
 <circle cx="267.5" cy="341.5" r="101.2" fill="none" stroke="#a0b6de" stroke-width="1" opacity="0.4"/>
</g>
<g fill="#10141c" filter="url(#b1)" opacity="0.9">
 <path d="M176,356 L182,342 Q188,336 196,336 L196,362 L175,362 Z"/>
 <path d="M337,341 Q350,343 357,356 L357,365 L337,365 Z"/>
</g>
<!-- controls shade -->
<rect x="0" y="280" width="672" height="98" fill="url(#shade)"/>
<!-- controls -->
<path d="M21.5,325.5 L30,330.5 L21.5,335.5 Z" fill="#fff"/>
<text x="48" y="335" font-family="Liberation Sans" font-size="14" fill="#fff" stroke="#fff" stroke-width="0.45">0:00 / 0:28</text>
<g opacity="0.55">
 <path d="M544.5,327.6 L547.2,327.6 L552,323.8 L552,336.2 L547.2,333.3 L544.5,333.3 Z" fill="#fff"/>
 <path d="M553.4,323 A6.2,7 0 0 1 553.4,337 Z M553.4,326 L553.4,334 A3.2,4 0 0 0 553.4,326 Z" fill="#fff" fill-rule="evenodd"/>
</g>
<g fill="none" stroke="#fff" stroke-width="2">
 <path d="M595,328 L595,325 L598,325"/>
 <path d="M602,325 L605,325 L605,328"/>
 <path d="M605,332 L605,335 L602,335"/>
 <path d="M598,335 L595,335 L595,332"/>
</g>
<g fill="#fff">
 <circle cx="648" cy="325" r="1.7"/>
 <circle cx="648" cy="330" r="1.7"/>
 <circle cx="648" cy="335" r="1.7"/>
</g>
<rect x="16" y="354" width="640" height="4" rx="1" fill="#d2d2d2"/>
</svg></div>

<svg class="abs" style="left:500px;top:522px" width="20" height="26" viewBox="0 0 20 26">
  <path d="M3.5,3.5 L3.5,19.5 L7.4,16.2 L10.2,21.6 L12.6,20.6 L10.0,15.4 L15,15.2 Z" fill="#fff" stroke="#000" stroke-width="1.2" stroke-linejoin="round"/>
</svg>

<div id="title">blue bubble backgrounds nature sky bubbles ball free Stock Video</div>
<div id="desc">Our contributor photographer video tagged as bubbles ball sky blue nature backgrounds bubble abstract transparent drop sphere pattern circle liquid wet outdoors water reflection flying cloud sky animated background</div>

<div id="tags">
<div class="tag" style="left:96px;top:648px;width:120px">bubbles videos</div>
<div class="tag" style="left:219px;top:648px;width:90px">ball videos</div>
<div class="tag" style="left:313px;top:648px;width:87px">sky videos</div>
<div class="tag" style="left:404px;top:648px;width:95px">blue videos</div>
<div class="tag" style="left:503px;top:648px;width:109px">nature videos</div>
<div class="tag" style="left:615px;top:648px;width:153px">backgrounds videos</div>
<div class="tag" style="left:771px;top:648px;width:114px">bubble videos</div>
<div class="tag" style="left:888px;top:648px;width:119px">abstract videos</div>

<div class="tag" style="left:96px;top:690px;width:142px">transparent videos</div>
<div class="tag" style="left:242px;top:690px;width:98px">drop videos</div>
<div class="tag" style="left:344px;top:690px;width:111px">sphere videos</div>
<div class="tag" style="left:459px;top:690px;width:114px">pattern videos</div>
<div class="tag" style="left:577px;top:690px;width:99px">circle videos</div>
<div class="tag" style="left:681px;top:690px;width:104px">liquid videos</div>
<div class="tag" style="left:789px;top:690px;width:89px">wet videos</div>
<div class="tag" style="left:882px;top:690px;width:127px">outdoors videos</div>

<div class="tag" style="left:96px;top:731px;width:103px">water videos</div>
<div class="tag" style="left:203px;top:731px;width:129px">reflection videos</div>
<div class="tag" style="left:335px;top:731px;width:103px">flying videos</div>
<div class="tag" style="left:442px;top:731px;width:103px">cloud videos</div>
<div class="tag" style="left:548px;top:731px;width:88px">sky videos</div>
<div class="tag" style="left:639px;top:731px;width:213px">animated background videos</div>
</div>

<div id="dl"><div id="dltxt">DOWNLOAD FREE</div>
<svg class="abs" style="left:206px;top:13px" width="16" height="12" viewBox="0 0 16 12">
  <polyline points="2.6,2.8 8,8 13.4,2.8" fill="none" stroke="#fff" stroke-width="2.8" stroke-linecap="round" stroke-linejoin="round"/>
</svg>
</div>
<div id="info">
  <div class="lab" style="top:22px">Duration —</div><div class="val" style="top:22px">28.37 s</div>
  <div class="lab" style="top:49px">Resolution —</div><div class="val" style="top:49px">3840x2160</div>
  <div class="lab" style="top:76px">Format —</div><div class="val" style="top:76px">video/mp4</div>
  <div class="lab" style="top:103px">FPS —</div><div class="val" style="top:103px">30</div>
  <div class="lab" style="top:130px">Size —</div><div class="val" style="top:130px">85 MiB</div>
  <div class="lab" style="top:157px">License —</div><div class="val" style="top:157px;letter-spacing:-0.22px">Free for commercial USE</div>
</div>
<div class="abs" style="left:1064px;top:837px;width:292px;height:1px;background:#eee"></div>

<div class="abs" style="left:156px;top:881px;width:4px;height:3px;background:#333"></div><div class="abs" style="left:204px;top:881px;width:6px;height:3px;border-radius:3px 3px 0 0;background:#333"></div><div class="abs" style="left:298px;top:881px;width:4px;height:3px;background:#333"></div>
</body></html>
